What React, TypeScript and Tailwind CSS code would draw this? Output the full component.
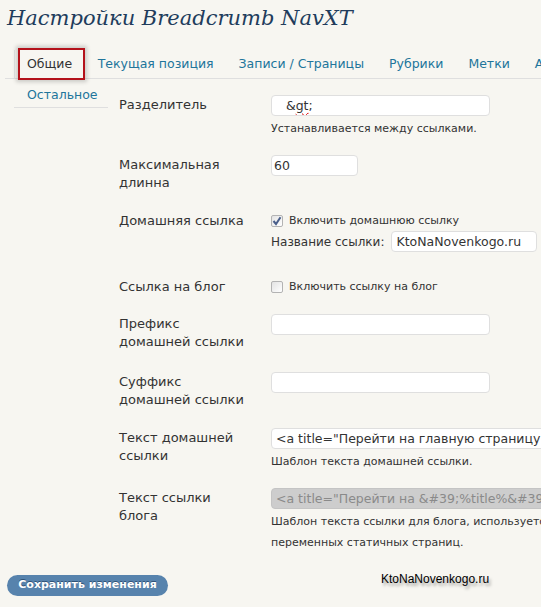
const tabs = ["Текущая позиция", "Записи / Страницы", "Рубрики", "Метки", "Архивы"];

const field =
  "h-[21px] rounded-[4px] border px-[2px] text-[12.5px] leading-[19px] whitespace-nowrap overflow-hidden";
const normal = "border-[#dfdfdf] bg-white text-[#333]";

function Help({ children }: { children: React.ReactNode }) {
  return <p className="mt-[2px] text-[11px] leading-[21px] text-[#333]">{children}</p>;
}

function Checkbox({ checked }: { checked?: boolean }) {
  return (
    <span className="flex h-[12px] w-[12px] shrink-0 items-center justify-center rounded-[2px] border border-[#b3b3b3] bg-gradient-to-br from-[#e3e3e3] to-white">
      {checked && (
        <svg viewBox="0 0 10 10" className="h-[10px] w-[10px]">
          <path d="M1.5 5 L4 8 L8.5 1.2" fill="none" stroke="#4a5f8a" strokeWidth="2" />
        </svg>
      )}
    </span>
  );
}

function Row({
  label,
  className,
  children,
}: {
  label: React.ReactNode;
  className?: string;
  children: React.ReactNode;
}) {
  return (
    <div className={`flex ${className ?? ""}`}>
      <div className="w-[152px] shrink-0 pt-[1px] text-[13px] leading-[18px] text-[#333]">{label}</div>
      <div className="min-w-0 flex-1">{children}</div>
    </div>
  );
}

export default function App() {
  return (
    <div
      className="relative h-[607px] w-[541px] overflow-hidden bg-[#f7f6f1]"
      style={{ fontFamily: '"DejaVu Sans", Verdana, sans-serif' }}
    >
      <h2
        className="pl-[7px] pt-[2px] text-[21px] italic leading-[32px] text-[#213c5c]"
        style={{ fontFamily: '"DejaVu Serif", Georgia, serif' }}
      >
        Настройки Breadcrumb NavXT
      </h2>

      <div className="ml-[5px] mt-[16px] flex h-[29px] items-end border-b border-[#dfdfdf] text-[12.5px]">
        <div className="relative ml-[9px] flex h-[28px] items-center border-l border-[#e4e4e4] pl-[12px] pr-[13px] text-[#333]">
          Общие
          <span className="absolute left-[3px] top-[-2px] h-[32px] w-[67px] border-2 border-[#b4121b] shadow-[0_0_4px_2px_rgba(0,0,0,0.18)]" />
        </div>
        {tabs.map((t) => (
          <div key={t} className="flex h-[28px] shrink-0 items-center px-[12.5px] text-[#21759b]">
            {t}
          </div>
        ))}
      </div>

      <div className="flex">
        <div className="ml-[14px] w-[94px] shrink-0 self-start border-b border-[#dfdfdf] pb-[3px] pl-[13px] pt-[7px] text-[12.5px] leading-[18px] text-[#21759b]">
          Остальное
        </div>

        <div className="ml-[11px] mt-[16px] flex-1">
          <Row label="Разделитель">
            <div className={`${field} ${normal} w-[219px]`}>
              &nbsp;&nbsp;&nbsp;&amp;
              <span className="underline decoration-[#d00] decoration-wavy decoration-1 underline-offset-2">gt</span>;
            </div>
            <Help>Устанавливается между ссылками.</Help>
          </Row>

          <Row label={<>Максимальная<br />длинна</>} className="mt-[16px]">
            <div className={`${field} ${normal} w-[87px]`}>60</div>
          </Row>

          <Row label="Домашняя ссылка" className="mt-[19px]">
            <div className="flex h-[20px] items-center gap-[6px] text-[11px] text-[#333]">
              <Checkbox checked />
              Включить домашнюю ссылку
            </div>
            <div className="flex items-center gap-[7px] text-[12px] text-[#333]">
              Название ссылки:
              <div className={`${field} ${normal} w-[146px] pl-[4px]`}>KtoNaNovenkogo.ru</div>
            </div>
          </Row>

          <Row label="Ссылка на блог" className="mt-[25px]">
            <div className="flex h-[20px] items-center gap-[6px] text-[11px] text-[#333]">
              <Checkbox />
              Включить ссылку на блог
            </div>
          </Row>

          <Row label={<>Префикс<br />домашней ссылки</>} className="mt-[17px]">
            <div className={`${field} ${normal} w-[219px]`} />
          </Row>

          <Row label={<>Суффикс<br />домашней ссылки</>} className="mt-[21px]">
            <div className={`${field} ${normal} w-[219px]`} />
          </Row>

          <Row label={<>Текст домашней<br />ссылки</>} className="mt-[19px]">
            <div className={`${field} ${normal} w-[300px] pl-[4px]`}>
              &lt;a title="Перейти на главную страницу &quot;%title%&quot;"
            </div>
            <Help>Шаблон текста домашней ссылки.</Help>
          </Row>

          <Row label={<>Текст ссылки<br />блога</>} className="mt-[16px]">
            <div className={`${field} w-[300px] border-[#c4c4c4] bg-[#cdcdcd] pl-[4px] text-[#8a8a8a]`}>
              &lt;a title="Перейти на &amp;#39;%title%&amp;#39;"
            </div>
            <p className="mt-[2px] whitespace-nowrap text-[11px] leading-[21px] text-[#333]">
              Шаблон текста ссылки для блога, используется вместо
              <br />
              переменных статичных страниц.
            </p>
          </Row>
        </div>
      </div>

      <div className="ml-[7px] mt-[22px] flex items-start">
        <button className="h-[21px] w-[161px] rounded-full bg-[#5783ad] text-[11px] font-bold text-white [text-shadow:0_-1px_0_#2f5276]">
          Сохранить изменения
        </button>
        <span
          className="ml-[213px] -mt-[5px] text-[12px] text-black [text-shadow:2px_3px_3px_rgba(0,0,0,0.35)]"
          style={{ fontFamily: '"Liberation Sans", Arial, sans-serif' }}
        >
          KtoNaNovenkogo.ru
        </span>
      </div>
    </div>
  );
}
